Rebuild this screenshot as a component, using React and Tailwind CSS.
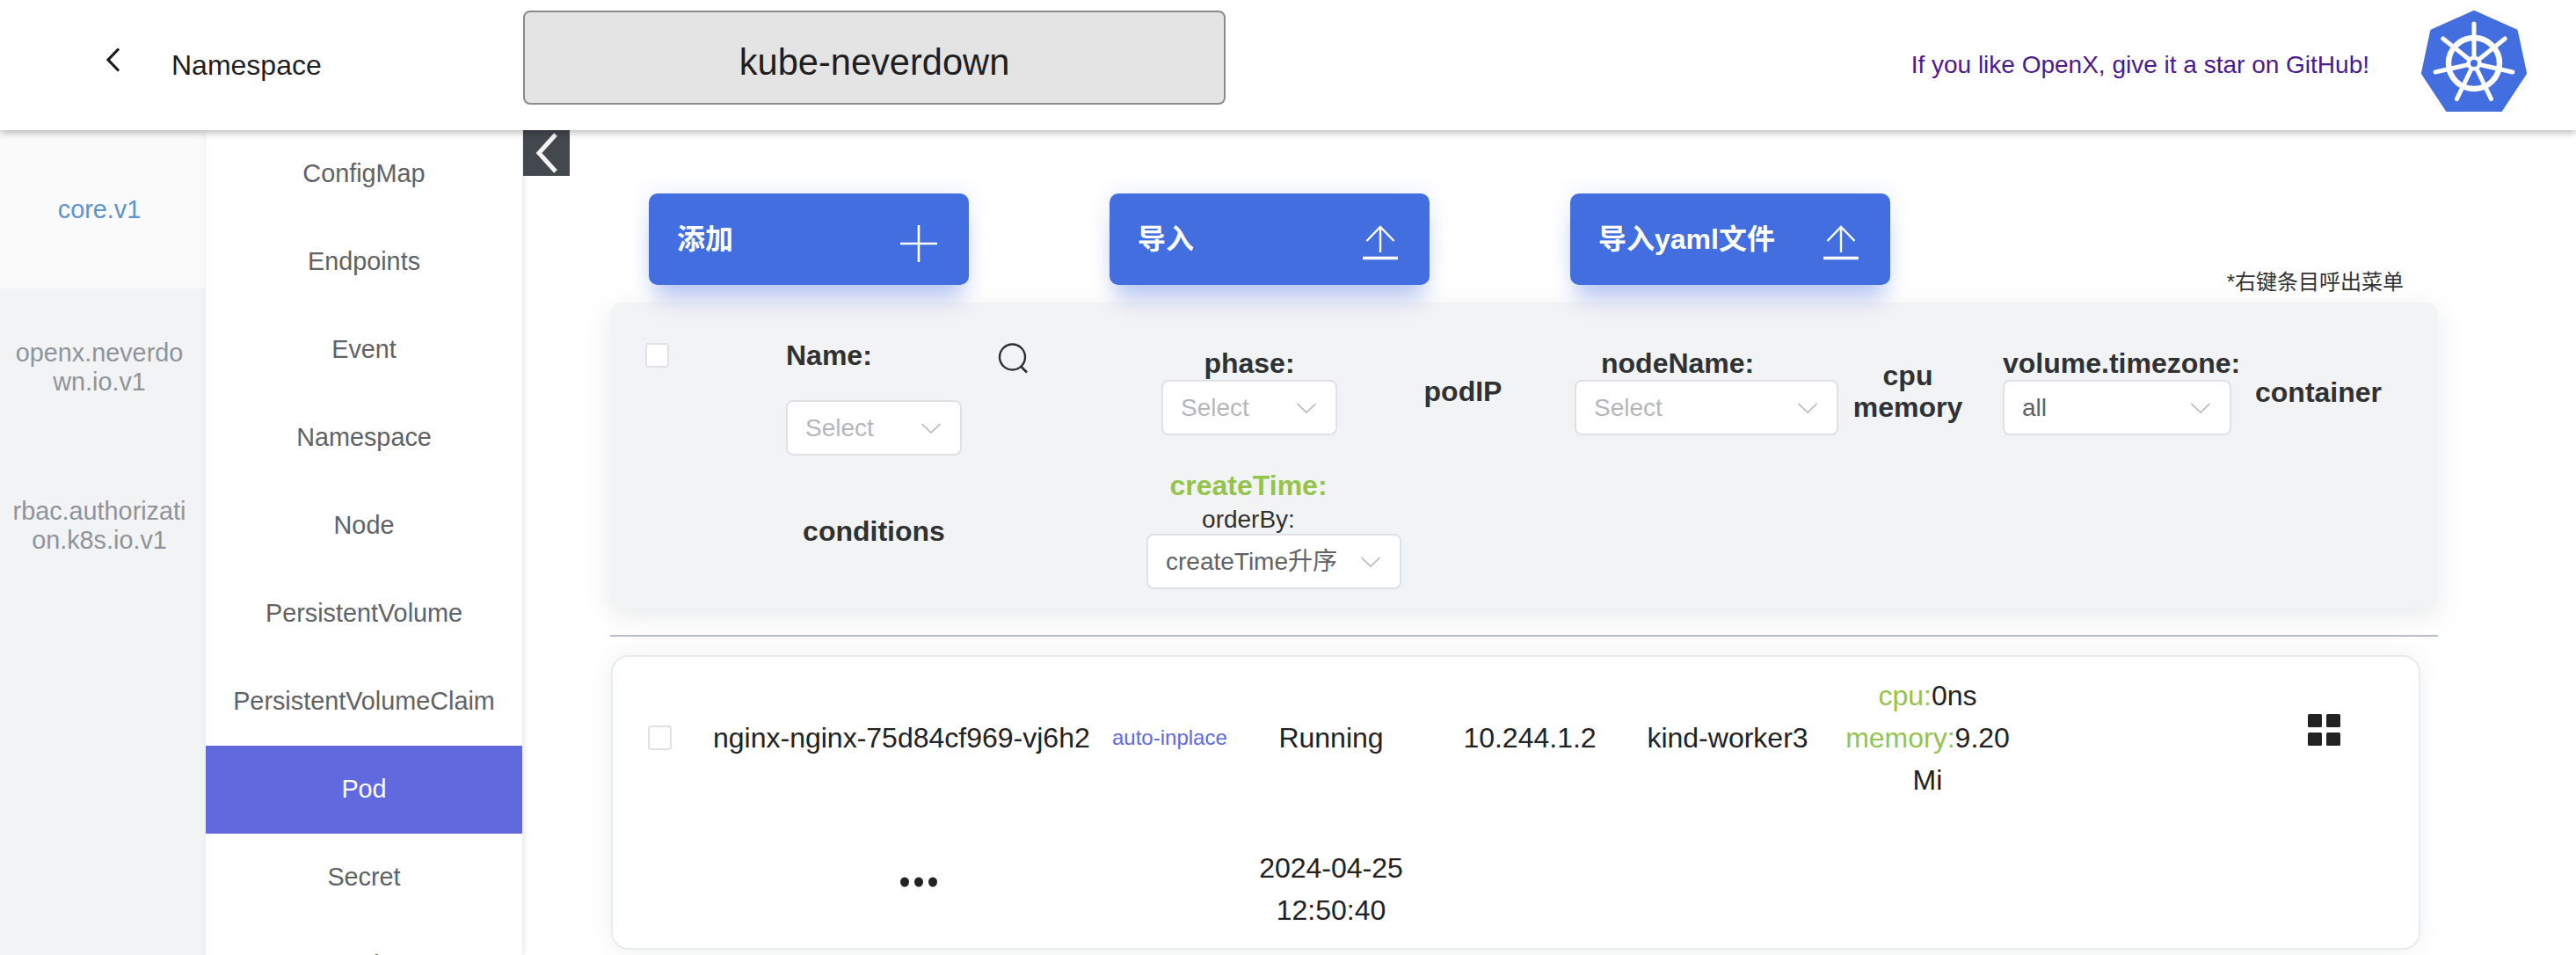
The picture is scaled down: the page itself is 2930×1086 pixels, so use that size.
import React from "react";

function Caret() {
  return (
    <svg width="24" height="12" viewBox="0 0 24 12" fill="none" className="shrink-0">
      <path d="M1.5 1 L12 11 L22.5 1" stroke="#b4b5bc" strokeWidth="1.6" />
    </svg>
  );
}

function Sel({ text, w, placeholder, extra = "" }) {
  return (
    <div className={`flex h-[63px] items-center justify-between rounded-lg border-2 border-[#e0e1e7] bg-white pl-[20px] pr-[21px] text-[28px] ${w} ${extra} ${placeholder ? "text-[#b5b6bc]" : "text-[#606266]"}`}>
      <span className="whitespace-nowrap">{text}</span>
      <Caret />
    </div>
  );
}

function Upload() {
  return (
    <svg width="40" height="42" viewBox="0 0 40 42" fill="none" className="mt-[10px]">
      <path d="M20 2 V31" stroke="#fff" strokeWidth="2.4" />
      <path d="M4.5 18 L20 2 L35.5 18" stroke="#fff" strokeWidth="2.4" />
      <path d="M0 37.5 H40" stroke="#fff" strokeWidth="3.4" />
    </svg>
  );
}

function Plus() {
  return (
    <svg width="42" height="42" viewBox="0 0 42 42" fill="none" className="mt-[10px]">
      <path d="M21 0 V42 M0 21 H42" stroke="#fff" strokeWidth="2.6" />
    </svg>
  );
}

function Btn({ text, icon }) {
  return (
    <div className="relative z-10 flex h-[104px] w-[364px] items-center justify-between rounded-[10px] bg-[#426ee0] pl-[32px] pr-[36px] text-[32px] font-bold text-white shadow-[0_24px_24px_-8px_rgba(65,105,225,0.32),0_0_24px_rgba(65,105,225,0.14)]">
      <span className="-mt-[1px] whitespace-nowrap">{text}</span>
      {icon}
    </div>
  );
}

function Logo() {
  const spokes = [0, 1, 2, 3, 4, 5, 6].map((i) => {
    const a = (i * 2 * Math.PI) / 7;
    return { x: 60 + 45 * Math.sin(a), y: 60 - 45 * Math.cos(a), k: i };
  });
  return (
    <svg width="120" height="115" viewBox="0 0 120 115" className="mt-3 shrink-0 self-start">
      <path d="M60 3 L107 24 L117 71 L86 118 L34 118 L3 71 L13 24 Z" fill="#426ee0" stroke="#426ee0" strokeWidth="6" strokeLinejoin="round" />
      <circle cx="60" cy="60" r="29" fill="none" stroke="#fff" strokeWidth="6.5" />
      {spokes.map((s) => (
        <line key={s.k} x1="60" y1="60" x2={s.x} y2={s.y} stroke="#fff" strokeWidth="5" strokeLinecap="round" />
      ))}
      <circle cx="60" cy="60" r="8.5" fill="#fff" />
      <circle cx="60" cy="60" r="4" fill="#426ee0" />
    </svg>
  );
}

const groups = [
  { lines: "core.v1", active: true },
  { lines: "openx.neverdown.io.v1" },
  { lines: "rbac.authorization.k8s.io.v1" },
];
const kinds = ["ConfigMap", "Endpoints", "Event", "Namespace", "Node", "PersistentVolume", "PersistentVolumeClaim", "Pod", "Secret", "Service"];

const labelCls = "text-[32px] font-bold leading-[37px] text-[#303133] whitespace-nowrap";

export default function App() {
  return (
    <div className="relative flex h-[1086px] w-[2930px] flex-col overflow-hidden bg-white font-['Liberation_Sans','Noto_Sans_CJK_SC',sans-serif]">
      <header className="relative z-20 flex h-[148px] shrink-0 items-center bg-white shadow-[0_2px_9px_rgba(0,0,0,0.32)]">
        <svg width="18" height="28" viewBox="0 0 18 28" fill="none" className="ml-[120px] -mt-[12px] shrink-0">
          <path d="M15 1.5 L3 14 L15 26.5" stroke="#1a1a1a" strokeWidth="3.2" />
        </svg>
        <div className="ml-[57px] w-[400px] shrink-0 text-[32px] text-[#1f1f1f]">Namespace</div>
        <div className="mt-[-17px] flex h-[107px] w-[799px] shrink-0 items-center justify-center rounded-lg border-2 border-[#8b8b8b] bg-[#e4e4e4] pt-[11px] text-[41.6px] text-[#1f1f1f]">
          kube-neverdown
        </div>
        <div className="ml-auto text-[28px] text-[#4b1a8c]">If you like OpenX, give it a star on GitHub!</div>
        <div className="ml-[59px] mr-[56px] flex h-full">
          <Logo />
        </div>
      </header>

      <div className="flex min-h-0 flex-1">
        <aside className="w-[234px] shrink-0 bg-[#f2f3f5] text-[28.8px] leading-[33px] text-[#909399] shadow-[1px_0_5px_rgba(0,0,0,0.06)]">
          {groups.map((g) => (
            <div key={g.lines} className={`flex h-[180px] items-center justify-center pl-[11px] pr-[19px] text-center break-all ${g.active ? "bg-[#fafafa] text-[#5f93cf]" : ""}`}>
              <span className="w-full">{g.lines}</span>
            </div>
          ))}
        </aside>
        <nav className="relative z-[1] w-[360px] shrink-0 bg-white text-[28.8px] text-[#606266] shadow-[2px_0_6px_rgba(0,0,0,0.1)]">
          {kinds.map((k) => (
            <div key={k} className={`flex h-[100px] items-center justify-center ${k === "Pod" ? "bg-[#6169df] text-white" : ""}`}>
              {k}
            </div>
          ))}
        </nav>

        <main className="relative min-w-0 flex-1 pl-[100px] pr-[157px] pt-[72px]">
          <div className="absolute left-[1px] top-0 z-10 flex h-[52px] w-[53px] items-center justify-center bg-[#43484f]">
            <svg width="28" height="46" viewBox="0 0 28 46" fill="none">
              <path d="M24 2 L5 23 L24 44" stroke="#f4f4f4" strokeWidth="5" />
            </svg>
          </div>

          <div className="flex h-[124px] pl-[44px]">
            <div className="flex items-start gap-[160px]">
              <Btn text="添加" icon={<Plus />} />
              <Btn text="导入" icon={<Upload />} />
              <Btn text="导入yaml文件" icon={<Upload />} />
            </div>
            <div className="ml-auto mb-[8px] mr-[39px] self-end text-[24px] leading-[30px] text-[#333]">*右键条目呼出菜单</div>
          </div>

          {/* filter panel */}
          <section className="rounded-[14px] bg-[#f2f3f5] pb-[22px] pt-[42px] shadow-[0_8px_30px_rgba(90,100,115,0.14)]">
            <div className="flex items-start">
              <div className="ml-[40px] mt-[4px] h-[28px] w-[27px] shrink-0 rounded border-2 border-[#e0e1e7] bg-white" />
              <div className="ml-[133px] w-[300px] shrink-0">
                <div className="flex w-[277px] items-start justify-between">
                  <span className={labelCls}>Name:</span>
                  <svg width="36" height="36" viewBox="0 0 36 36" fill="none" className="mt-[4px]">
                    <circle cx="16.5" cy="16" r="14.5" stroke="#2b2f33" strokeWidth="2.4" />
                    <path d="M26.5 27 L33 33.5" stroke="#2b2f33" strokeWidth="2.6" />
                  </svg>
                </div>
                <Sel text="Select" w="w-[200px]" placeholder extra="mt-[29px]" />
              </div>
              <div className="ml-[127px] mt-[9px] flex w-[200px] shrink-0 flex-col items-center">
                <span className={labelCls}>phase:</span>
                <Sel text="Select" w="w-[200px]" placeholder />
              </div>
              <div className={`ml-[43px] mt-[41px] w-[200px] shrink-0 text-center ${labelCls}`}>podIP</div>
              <div className="ml-[27px] mt-[9px] w-[299px] shrink-0">
                <div className={`pl-[30px] ${labelCls}`}>nodeName:</div>
                <Sel text="Select" w="w-[300px]" placeholder />
              </div>
              <div className="mt-[23px] w-[160px] shrink-0 text-center text-[32px] font-bold leading-[36px] text-[#303133]">
                <div>cpu</div>
                <div>memory</div>
              </div>
              <div className="ml-[28px] mt-[9px] w-[269px] shrink-0">
                <div className={labelCls}>volume.timezone:</div>
                <Sel text="all" w="w-[260px]" />
              </div>
              <div className={`mt-[42px] w-[180px] shrink-0 text-center ${labelCls}`}>container</div>
            </div>
            <div className="mt-[16px] flex items-start">
              <div className={`ml-[200px] mt-[52px] w-[200px] shrink-0 text-center ${labelCls}`}>conditions</div>
              <div className="ml-[226px] w-[200px] shrink-0">
                <div className="text-center text-[32px] font-bold leading-[37px] text-[#95c44e]">createTime:</div>
                <div className="mt-[4px] text-center text-[28px] leading-[32px] text-[#303133]">orderBy:</div>
                <Sel text="createTime升序" w="w-[290px]" extra="-ml-[16px]" />
              </div>
            </div>
          </section>

          <div className="mt-[30px] h-[2px] bg-[#b8bfc6]" />

          {/* row */}
          <section className="ml-[1px] mr-[20px] mt-[21px] h-[335px] rounded-[20px] border-2 border-[#e8ebef] bg-white pt-[20px] text-[32px] leading-[48px] text-[#222] shadow-[0_0_24px_rgba(90,100,115,0.1)]">
            <div className="flex items-center">
              <div className="ml-[40px] h-[28px] w-[27px] shrink-0 rounded border-2 border-[#e0e1e7] bg-white" />
              <div className="ml-[47px] w-[454px] shrink-0 whitespace-nowrap">nginx-nginx-75d84cf969-vj6h2</div>
              <div className="w-[149px] shrink-0 whitespace-nowrap text-[24px] text-[#6169df]">auto-inplace</div>
              <div className="w-[200px] shrink-0 text-center">Running</div>
              <div className="ml-[26px] w-[200px] shrink-0 text-center">10.244.1.2</div>
              <div className="ml-[25px] w-[200px] shrink-0 text-center">kind-worker3</div>
              <div className="ml-[32px] w-[191px] shrink-0 text-center break-words">
                <div><span className="text-[#95c44e]">cpu:</span>0ns</div>
                <div><span className="text-[#95c44e]">memory:</span>9.20 Mi</div>
              </div>
              <svg width="38" height="36" viewBox="0 0 38 36" fill="#222" className="ml-[337px] -mt-[18px] shrink-0">
                <rect x="0" y="0" width="16" height="15" rx="1.5" />
                <rect x="21" y="0" width="16" height="15" rx="1.5" />
                <rect x="0" y="21" width="16" height="15" rx="1.5" />
                <rect x="21" y="21" width="16" height="15" rx="1.5" />
              </svg>
            </div>
            <div className="mt-[52px] flex items-center">
              <div className="flex w-[695px] shrink-0 justify-center">
                <svg width="42" height="12" viewBox="0 0 42 12" fill="#222" className="-mt-[14px]">
                  <ellipse cx="5" cy="6" rx="5" ry="5.5" />
                  <ellipse cx="21" cy="6" rx="5" ry="5.5" />
                  <ellipse cx="37" cy="6" rx="5" ry="5.5" />
                </svg>
              </div>
              <div className="ml-[22px] w-[200px] shrink-0 text-center">
                <div>2024-04-25</div>
                <div>12:50:40</div>
              </div>
            </div>
          </section>
        </main>
      </div>
    </div>
  );
}
